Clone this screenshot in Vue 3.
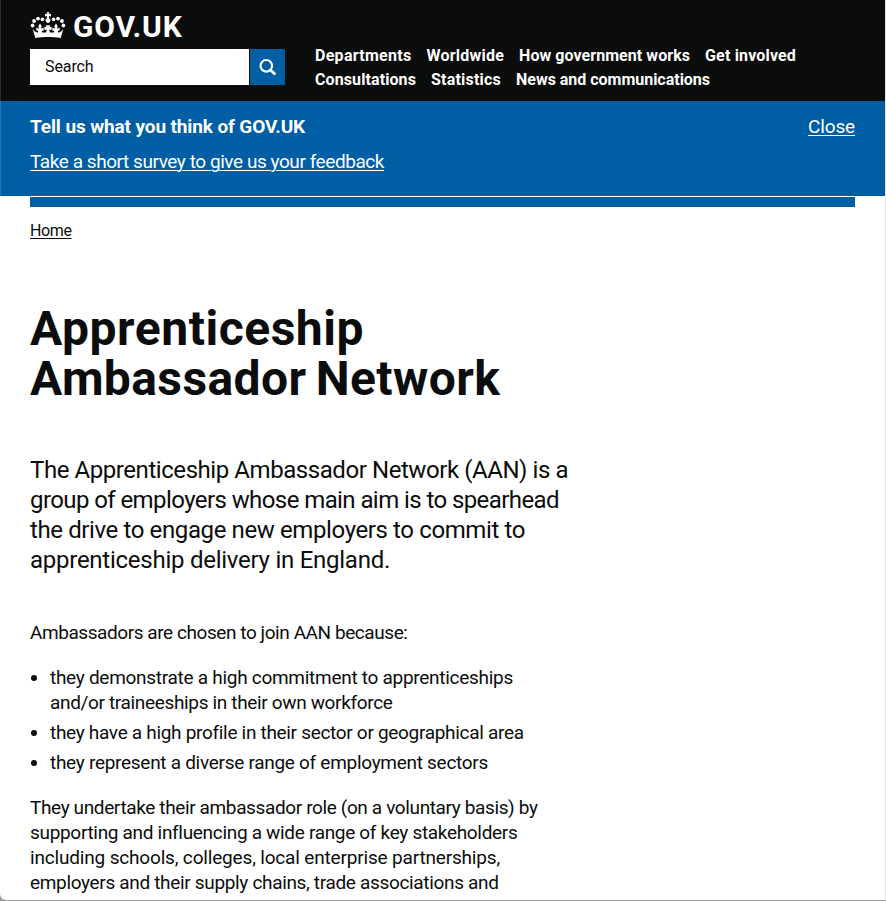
<script setup>
const navRows = [
  [
    { text: 'Departments', track: 0.285 },
    { text: 'Worldwide', track: 0.22 },
    { text: 'How government works', track: 0.058 },
    { text: 'Get involved', track: 0.163 }
  ],
  [
    { text: 'Consultations', track: 0.098 },
    { text: 'Statistics', track: 0.21 },
    { text: 'News and communications', track: -0.018 }
  ]
]
const title = [
  { text: 'Apprenticeship', track: 0.531 },
  { text: 'Ambassador Network', track: 0.4 }
]
const lead = [
  { text: 'The Apprenticeship Ambassador Network (AAN) is a', track: -0.433 },
  { text: 'group of employers whose main aim is to spearhead', track: -0.582 },
  { text: 'the drive to engage new employers to commit to', track: -0.388 },
  { text: 'apprenticeship delivery in England.', track: -0.256 }
]
const intro = { text: 'Ambassadors are chosen to join AAN because:', track: -0.432 }
const reasons = [
  [
    { text: 'they demonstrate a high commitment to apprenticeships', track: -0.282 },
    { text: 'and/or traineeships in their own workforce', track: -0.343 }
  ],
  [{ text: 'they have a high profile in their sector or geographical area', track: -0.307 }],
  [{ text: 'they represent a diverse range of employment sectors', track: -0.286 }]
]
const role = [
  { text: 'They undertake their ambassador role (on a voluntary basis) by', track: -0.373 },
  { text: 'supporting and influencing a wide range of key stakeholders', track: -0.315 },
  { text: 'including schools, colleges, local enterprise partnerships,', track: -0.172 },
  { text: 'employers and their supply chains, trade associations and', track: -0.332 }
]
const spacing = (l) => ({ letterSpacing: l.track + 'px' })
</script>

<template>
  <div class="window">
    <header class="masthead">
      <div class="brand">
        <a class="logo">
          <svg class="crown" viewBox="0 0 36 28" width="36" height="28" fill="#fff">
            <circle cx="2.6" cy="14.5" r="1.9" />
            <circle cx="4.1" cy="10" r="1.9" />
            <circle cx="8" cy="7.6" r="1.9" />
            <circle cx="12.4" cy="8.4" r="1.8" />
            <circle cx="33.4" cy="14.5" r="1.9" />
            <circle cx="31.9" cy="10" r="1.9" />
            <circle cx="28" cy="7.6" r="1.9" />
            <circle cx="23.6" cy="8.4" r="1.8" />
            <path d="M16.6 1.2h2.8l-.5 2 2.1-.5v2.8l-2.1-.5.5 2.6a2.3 2.3 0 1 1-2.8 0l.5-2.6-2.1.5V2.7l2.1.5z" />
            <path d="M2.6 17.5c1.4 2.6 3.2 3.9 5.2 4.1h20.4c2-.2 3.8-1.5 5.2-4.1l-2.7 9.4c-7.8-1.3-17.6-1.3-25.4 0z" />
            <path d="M15.8 14.2h4.4l-.9 2 2.2-.8v3.8l-2.2-.8.6 3.6h-3.8l.6-3.6-2.2.8v-3.8l2.2.8z" />
            <path d="M10 12.6l1.6 2.4-.5 2.8 2.7-1.3-.2 3-1.7.4.3 2.3H7.8l.3-2.3-1.7-.4-.2-3 2.7 1.3-.5-2.8z" />
            <path d="M26 12.6l1.6 2.4-.5 2.8 2.7-1.3-.2 3-1.7.4.3 2.3h-4.4l.3-2.3-1.7-.4-.2-3 2.7 1.3-.5-2.8z" />
          </svg>
          <span class="wordmark">GOV.UK</span>
        </a>
        <div class="search">
          <span class="field">Search</span>
          <button class="go" aria-label="Search">
            <svg viewBox="0 0 18 18" width="18" height="18" fill="none" stroke="#fff">
              <circle cx="7.3" cy="7.8" r="5.8" stroke-width="2.2" />
              <path d="m11.5 12 4.8 4.6" stroke-width="2.8" />
            </svg>
          </button>
        </div>
      </div>
      <nav class="nav">
        <div v-for="(row, r) in navRows" :key="r" class="nav-row">
          <a v-for="l in row" :key="l.text" :style="spacing(l)">{{ l.text }}</a>
        </div>
      </nav>
    </header>

    <section class="survey">
      <div>
        <p class="ask">Tell us what you think of GOV.UK</p>
        <a class="link take">Take a short survey to give us your feedback</a>
      </div>
      <a class="link close">Close</a>
    </section>

    <main class="page">
      <div class="bar"></div>
      <a class="crumb">Home</a>
      <h1><span v-for="l in title" :key="l.text" class="line" :style="spacing(l)">{{ l.text }}</span></h1>
      <p class="lead"><span v-for="l in lead" :key="l.text" class="line" :style="spacing(l)">{{ l.text }}</span></p>
      <p class="intro" :style="spacing(intro)">{{ intro.text }}</p>
      <ul>
        <li v-for="(item, i) in reasons" :key="i">
          <span v-for="l in item" :key="l.text" class="line" :style="spacing(l)">{{ l.text }}</span>
        </li>
      </ul>
      <p><span v-for="l in role" :key="l.text" class="line" :style="spacing(l)">{{ l.text }}</span></p>
    </main>
  </div>
</template>

<style>
body {
  background: #9a9a9a;
  overflow: hidden;
}
</style>

<style scoped>
.window {
  box-sizing: border-box;
  width: 886px;
  height: 900px;
  border-right: 1px solid #e4e4e4;
  border-bottom-left-radius: 6px;
  overflow: hidden;
  background: #fff;
  color: #0b0c0c;
  font: 19px/25px Roboto, sans-serif;
}
p, h1, ul { margin: 0; }
.line { display: block; white-space: nowrap; }
.masthead {
  display: flex;
  gap: 30px;
  height: 101px;
  box-sizing: border-box;
  padding: 11px 30px 0;
  background: #0b0c0c;
  box-shadow: inset 1px 0 #2b2c2c;
  color: #fff;
}
.brand { width: 255px; }
.logo { display: flex; gap: 7px; height: 38px; }
.wordmark { font-size: 30px; line-height: 31px; font-weight: 700; letter-spacing: 0.79px; }
.search { display: flex; gap: 1px; height: 36px; }
.field {
  width: 219px;
  box-sizing: border-box;
  padding-left: 15px;
  background: #fff;
  color: #0b0c0c;
  font-size: 16px;
  line-height: 36px;
  letter-spacing: -0.1px;
}
.go {
  display: grid;
  place-items: center;
  width: 35px;
  padding: 0;
  border: 0;
  background: #005ea5;
}
.nav { padding-top: 33px; font-size: 16px; font-weight: 700; line-height: 24px; }
.nav-row { display: flex; gap: 15px; white-space: nowrap; }
.survey {
  display: flex;
  justify-content: space-between;
  height: 95px;
  box-sizing: border-box;
  padding: 13px 30px 0;
  background: #005ea5;
  box-shadow: inset 1px 0 #2874b0;
  color: #fff;
}
.ask { margin-bottom: 10px; font-weight: 700; letter-spacing: -0.116px; }
.link { text-decoration: underline; text-decoration-thickness: 1px; text-underline-offset: 2px; }
.take { letter-spacing: -0.44px; }
.close { letter-spacing: -0.14px; }
.page { padding: 1px 30px 0; }
.bar { height: 10px; background: #005ea5; }
.crumb {
  display: block;
  width: max-content;
  margin-top: 14px;
  font-size: 16px;
  line-height: 20px;
  letter-spacing: -0.39px;
  text-decoration: underline;
  text-decoration-thickness: 1px;
  text-underline-offset: 2px;
}
h1 { margin-top: 63px; font-size: 48px; line-height: 50px; font-weight: 700; word-spacing: -3px; }
.lead { margin-top: 51px; font-size: 24px; line-height: 30px; }
.intro { margin-top: 45px; }
ul { margin: 20px 0; padding: 0 0 0 20px; list-style: disc; }
li { margin-bottom: 5px; }
li:last-child { margin-bottom: 0; }
</style>
